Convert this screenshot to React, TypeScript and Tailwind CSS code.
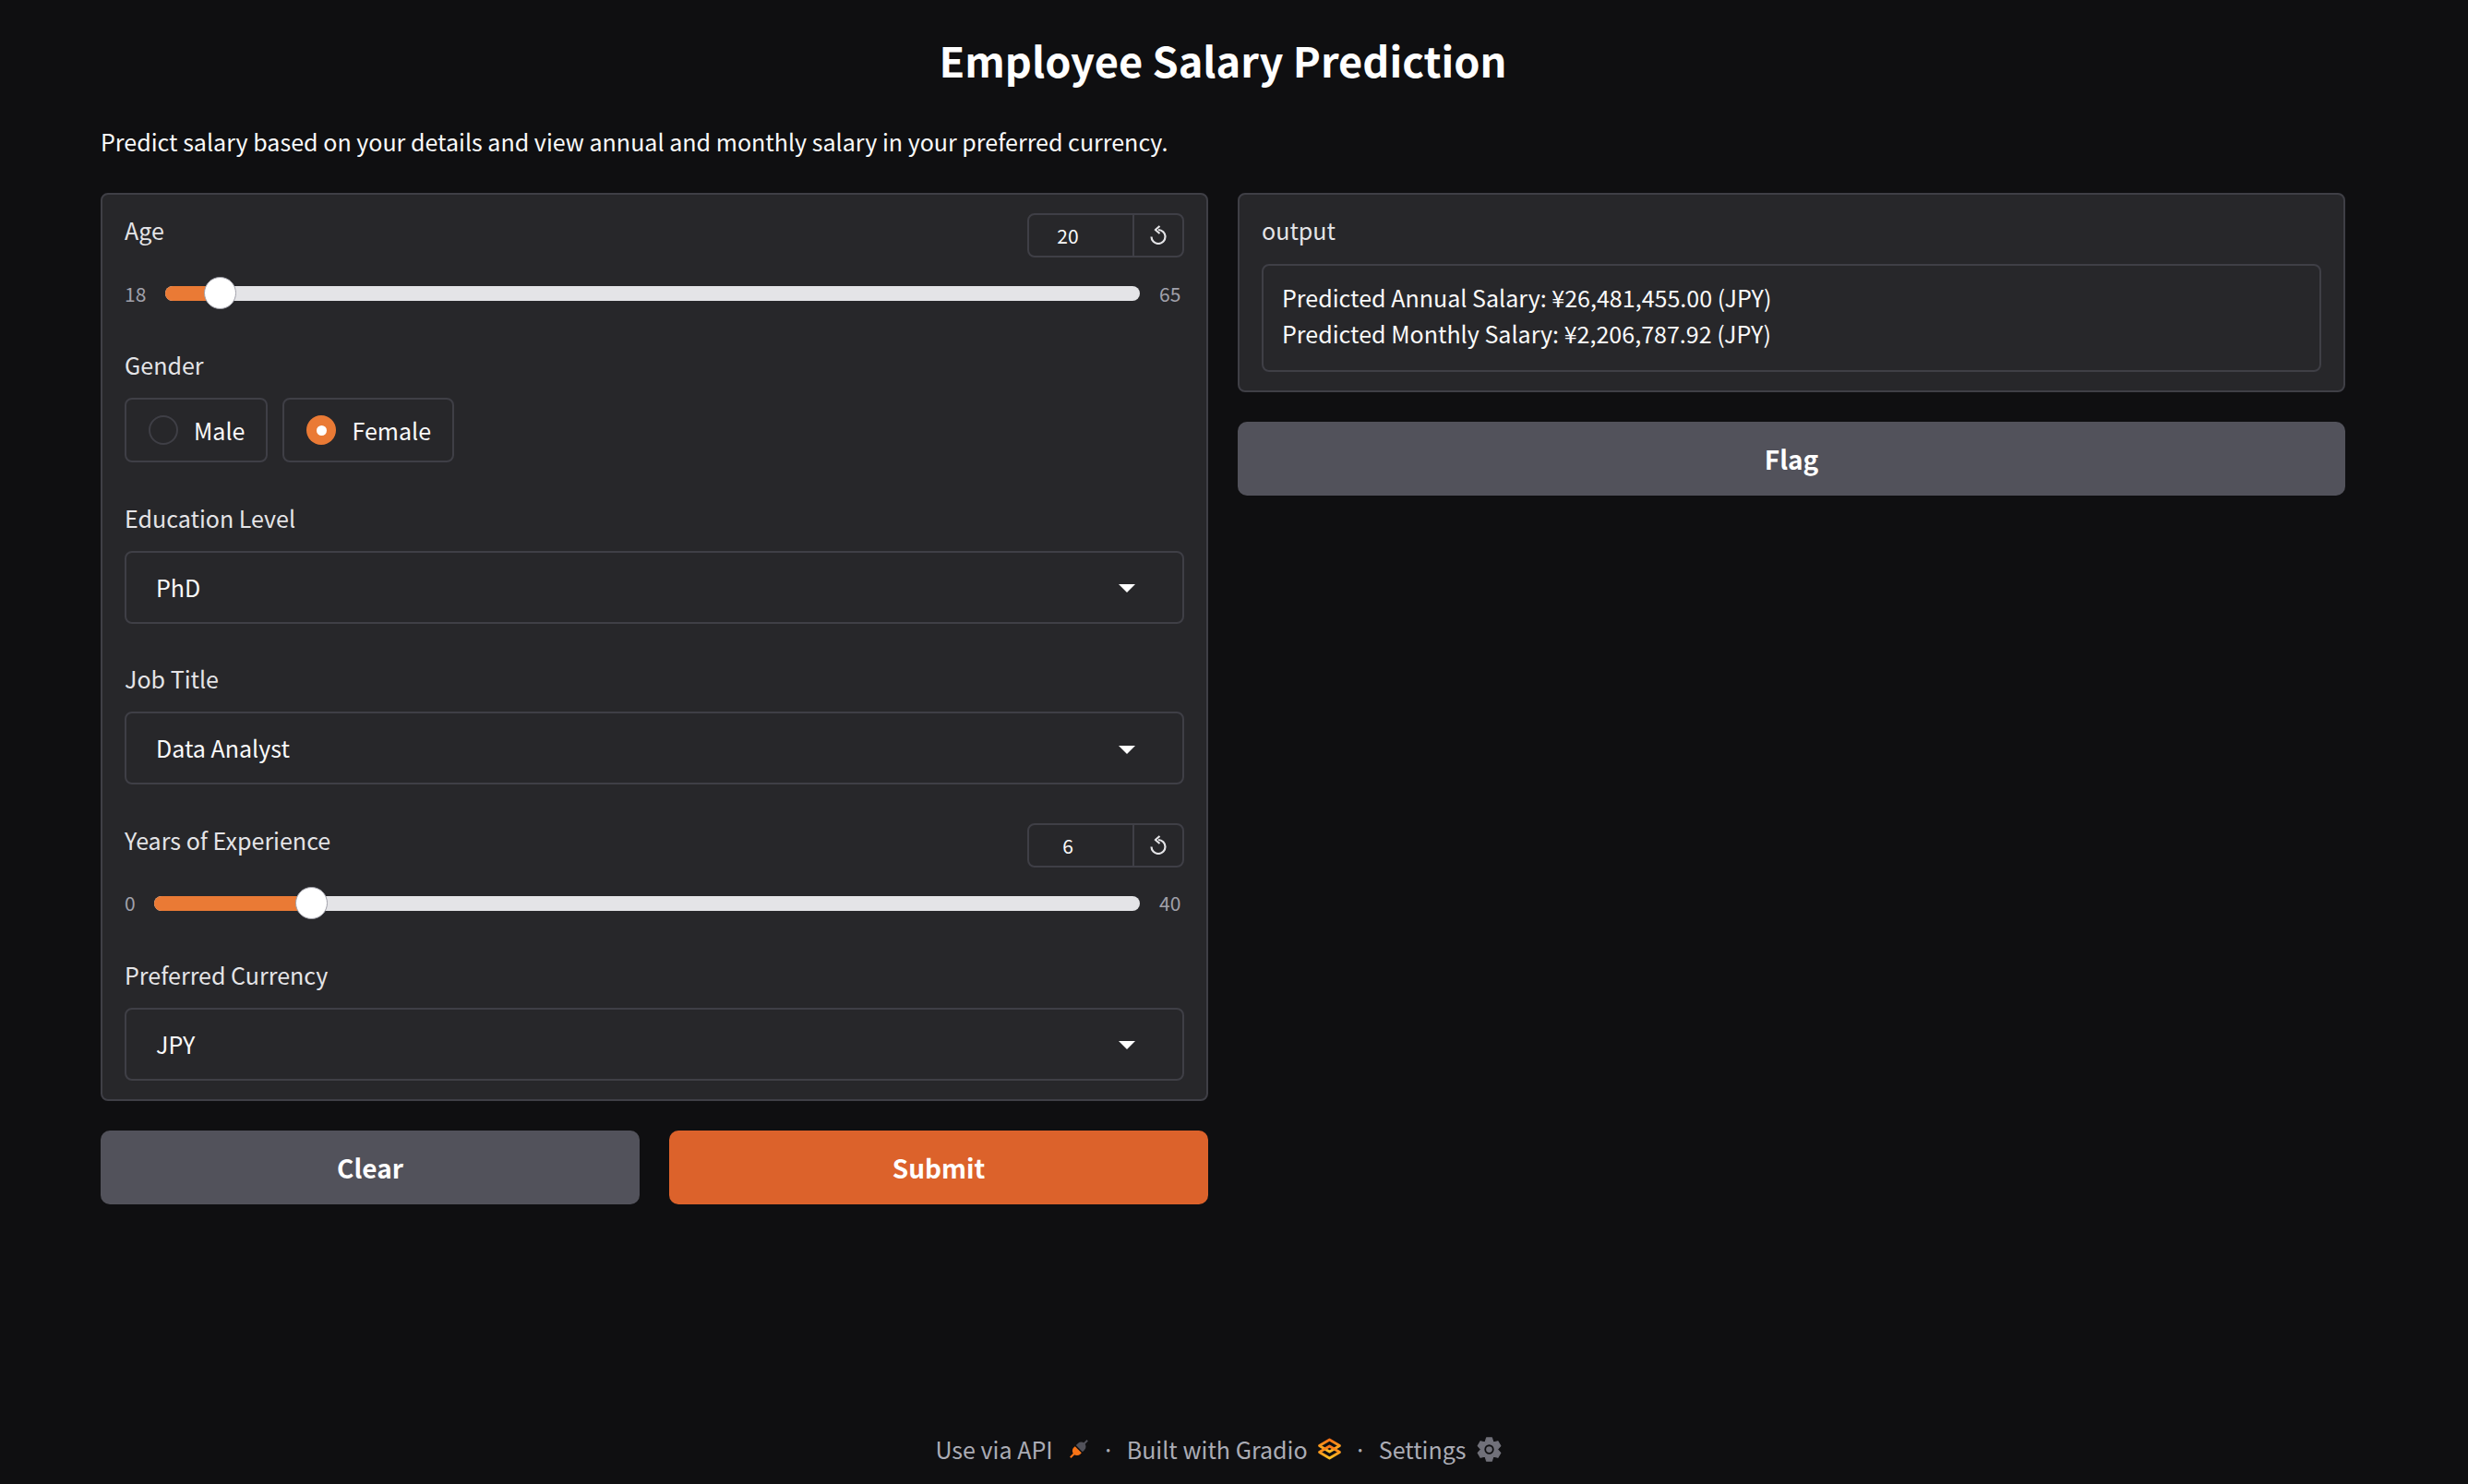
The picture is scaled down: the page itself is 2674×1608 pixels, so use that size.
import { ReactNode } from 'react';

const font = { fontFamily: '"Noto Sans CJK JP", "Noto Sans", sans-serif' };

// six flat teeth, one pointing straight up
const gearPoints = [0, 60, 120, 180, 240, 300]
  .flatMap((deg) => [
    [deg - 27, 8.2],
    [deg - 13, 11.5],
    [deg + 13, 11.5],
    [deg + 27, 8.2],
  ])
  .map(([deg, r]) => {
    const a = ((deg - 90) * Math.PI) / 180;
    return `${(12 + r * Math.cos(a)).toFixed(2)},${(12 + r * Math.sin(a)).toFixed(2)}`;
  })
  .join(' ');

function Label({ children }: { children: ReactNode }) {
  return <span className="block h-[36px] text-[25.05px] leading-[36px] text-[#e4e4e7]">{children}</span>;
}

function ResetIcon() {
  return (
    <svg className="mb-[1px]" width="20" height="21" viewBox="0 0 20 21" fill="none" stroke="#e4e4e7" strokeWidth="2.200">
      <path d="M10 5a7.500 7.500 0 1 1-7.500 7.500" />
      <path d="M11.500 1 6.800 5l4.700 4" strokeLinejoin="round" />
    </svg>
  );
}

function SliderField({ label, value, min, max, minClass, fillClass }: { label: string; value: string; min: string; max: string; minClass: string; fillClass: string }) {
  return (
    <div>
      <div className="flex h-[48px] justify-between">
        <Label>{label}</Label>
        <div className="flex h-[48px] w-[170px] rounded-[8px] border-2 border-[#3f3f46] text-[#fafafa]">
          <span className="flex w-[114px] items-center justify-center border-r-2 border-[#3f3f46] pr-[28px] pt-[1px] text-[21px] leading-none">{value}</span>
          <span className="flex flex-1 items-center justify-center"><ResetIcon /></span>
        </div>
      </div>
      <div className="mt-[21px] flex h-[36px] items-center">
        <span className={`text-[21px] leading-none text-[#a1a1aa] ${minClass}`}>{min}</span>
        <div className="h-[16px] flex-1 rounded-full bg-[#e4e4e7]">
          <div className={`relative h-full rounded-l-full bg-[#ea7a35] ${fillClass}`}>
            <span className="absolute right-[-17px] top-[-10px] h-[35px] w-[35px] rounded-full border border-[#a1a1aa] bg-white" />
          </div>
        </div>
        <span className="ml-[21px] w-[27px] text-[21px] leading-none text-[#a1a1aa]">{max}</span>
      </div>
    </div>
  );
}

function Radio({ label, checked }: { label: string; checked?: boolean }) {
  return (
    <div className="flex h-[70px] items-center gap-[17px] rounded-[8px] border-2 border-[#3f3f46] pl-[24px] pr-[23px]">
      {checked ? (
        <span className="flex h-[32px] w-[32px] items-center justify-center rounded-full bg-[#ea7a35]">
          <span className="h-[11px] w-[11px] rounded-full bg-white" />
        </span>
      ) : (
        <span className="h-[32px] w-[32px] rounded-full border-2 border-[#3f3f46] bg-[#27272a]" />
      )}
      <span className="text-[25.05px] leading-none text-[#fafafa]">{label}</span>
    </div>
  );
}

function SelectField({ label, value }: { label: string; value: string }) {
  return (
    <div>
      <Label>{label}</Label>
      <div className="mt-[18px] flex h-[79px] items-center justify-between rounded-[8px] border-2 border-[#3f3f46] pl-[32px] pr-[51px]">
        <span className="text-[25.05px] leading-none text-[#fafafa]">{value}</span>
        <span className="mt-[3px] h-0 w-0 border-x-[9px] border-t-[9px] border-x-transparent border-t-white" />
      </div>
    </div>
  );
}

function Button({ children, className }: { children: ReactNode; className: string }) {
  return (
    <button className={`flex h-[80px] items-center justify-center rounded-[10px] text-[28px] font-semibold leading-none text-white ${className}`}>
      {children}
    </button>
  );
}

export default function App() {
  return (
    <div style={font} className="flex min-h-[1608px] w-[2674px] flex-col bg-[#0f0f11] pl-[109px] pr-[133px]">
      <h1 className="mt-[37px] h-[56px] text-center text-[45.2px] font-semibold leading-[56px] text-white">Employee Salary Prediction</h1>
      <p className="mt-[42px] h-[36px] text-[25.05px] leading-[36px] text-[#fafafa]">
        Predict salary based on your details and view annual and monthly salary in your preferred currency.
      </p>

      <div className="mt-[38px] grid grid-cols-2 gap-[32px]">
        <div className="flex flex-col gap-[32px]">
          <div className="flex flex-col gap-[41.4px] rounded-[8px] border-2 border-[#3f3f46] bg-[#27272a] px-[24px] py-[20px]">
            <SliderField label="Age" value="20" min="18" max="65" minClass="w-[44px]" fillClass="w-[60px]" />
            <div>
              <Label>Gender</Label>
              <div className="mt-[18px] flex gap-[16px]">
                <Radio label="Male" />
                <Radio label="Female" checked />
              </div>
            </div>
            <SelectField label="Education Level" value="PhD" />
            <SelectField label="Job Title" value="Data Analyst" />
            <SliderField label="Years of Experience" value="6" min="0" max="40" minClass="w-[32px]" fillClass="w-[171px]" />
            <SelectField label="Preferred Currency" value="JPY" />
          </div>
          <div className="grid grid-cols-2 gap-[32px]">
            <Button className="bg-[#52525b]">Clear</Button>
            <Button className="bg-[#dc622b]">Submit</Button>
          </div>
        </div>

        <div className="flex flex-col gap-[32px]">
          <div className="rounded-[8px] border-2 border-[#3f3f46] bg-[#27272a] px-[24px] py-[20px]">
            <Label>output</Label>
            <div className="mt-[19px] rounded-[8px] border-2 border-[#3f3f46] pb-[20px] pl-[20px] pt-[15px] text-[25.05px] leading-[39px] text-[#fafafa]">
              <div>Predicted Annual Salary: ¥26,481,455.00 (JPY)</div>
              <div>Predicted Monthly Salary: ¥2,206,787.92 (JPY)</div>
            </div>
          </div>
          <Button className="bg-[#52525b]">Flag</Button>
        </div>
      </div>

      <footer className="mt-auto mb-[23px] flex h-[30px] items-center justify-center pr-[10px] text-[25.05px] leading-[30px] text-[#abacb5]">
        <span>Use via API</span>
        <svg className="ml-[16px]" width="24" height="24" viewBox="0 0 24 24">
          <g transform="rotate(45 12 12)">
            <path d="M7 11.500h10V8.500a5 5 0 0 0-10 0z" fill="#52525b" />
            <rect x="11" y="-1" width="2" height="6" fill="#52525b" />
            <path d="M7 13h10v2a5 5 0 0 1-10 0z" fill="#f97316" />
            <rect x="11" y="18" width="2" height="7" fill="#f97316" />
          </g>
        </svg>
        <span className="mx-[13px]">·</span>
        <span>Built with Gradio</span>
        <svg className="ml-[10px]" width="27" height="24" viewBox="0 0 27 24" fill="none" strokeWidth="2.800" strokeLinejoin="round">
          <defs>
            <linearGradient id="gradio-logo" x1="0" y1="0" x2="0" y2="1">
              <stop offset="0" stopColor="#f97316" />
              <stop offset="1" stopColor="#fbbf24" />
            </linearGradient>
          </defs>
          <path d="M13.500 2 24.500 8.500 13.500 15 2.500 8.500z" stroke="url(#gradio-logo)" />
          <path d="M13.500 9 24.500 15.500 13.500 22 2.500 15.500z" stroke="url(#gradio-logo)" />
        </svg>
        <span className="mx-[13px]">·</span>
        <span>Settings</span>
        <svg className="ml-[11px]" width="27" height="27" viewBox="0 0 24 24">
          <polygon points={gearPoints} fill="#71717a" stroke="#71717a" strokeLinejoin="round" />
          <circle cx="12" cy="12" r="3.800" fill="#71717a" stroke="#0f0f11" strokeWidth="1.600" />
        </svg>
      </footer>
    </div>
  );
}
